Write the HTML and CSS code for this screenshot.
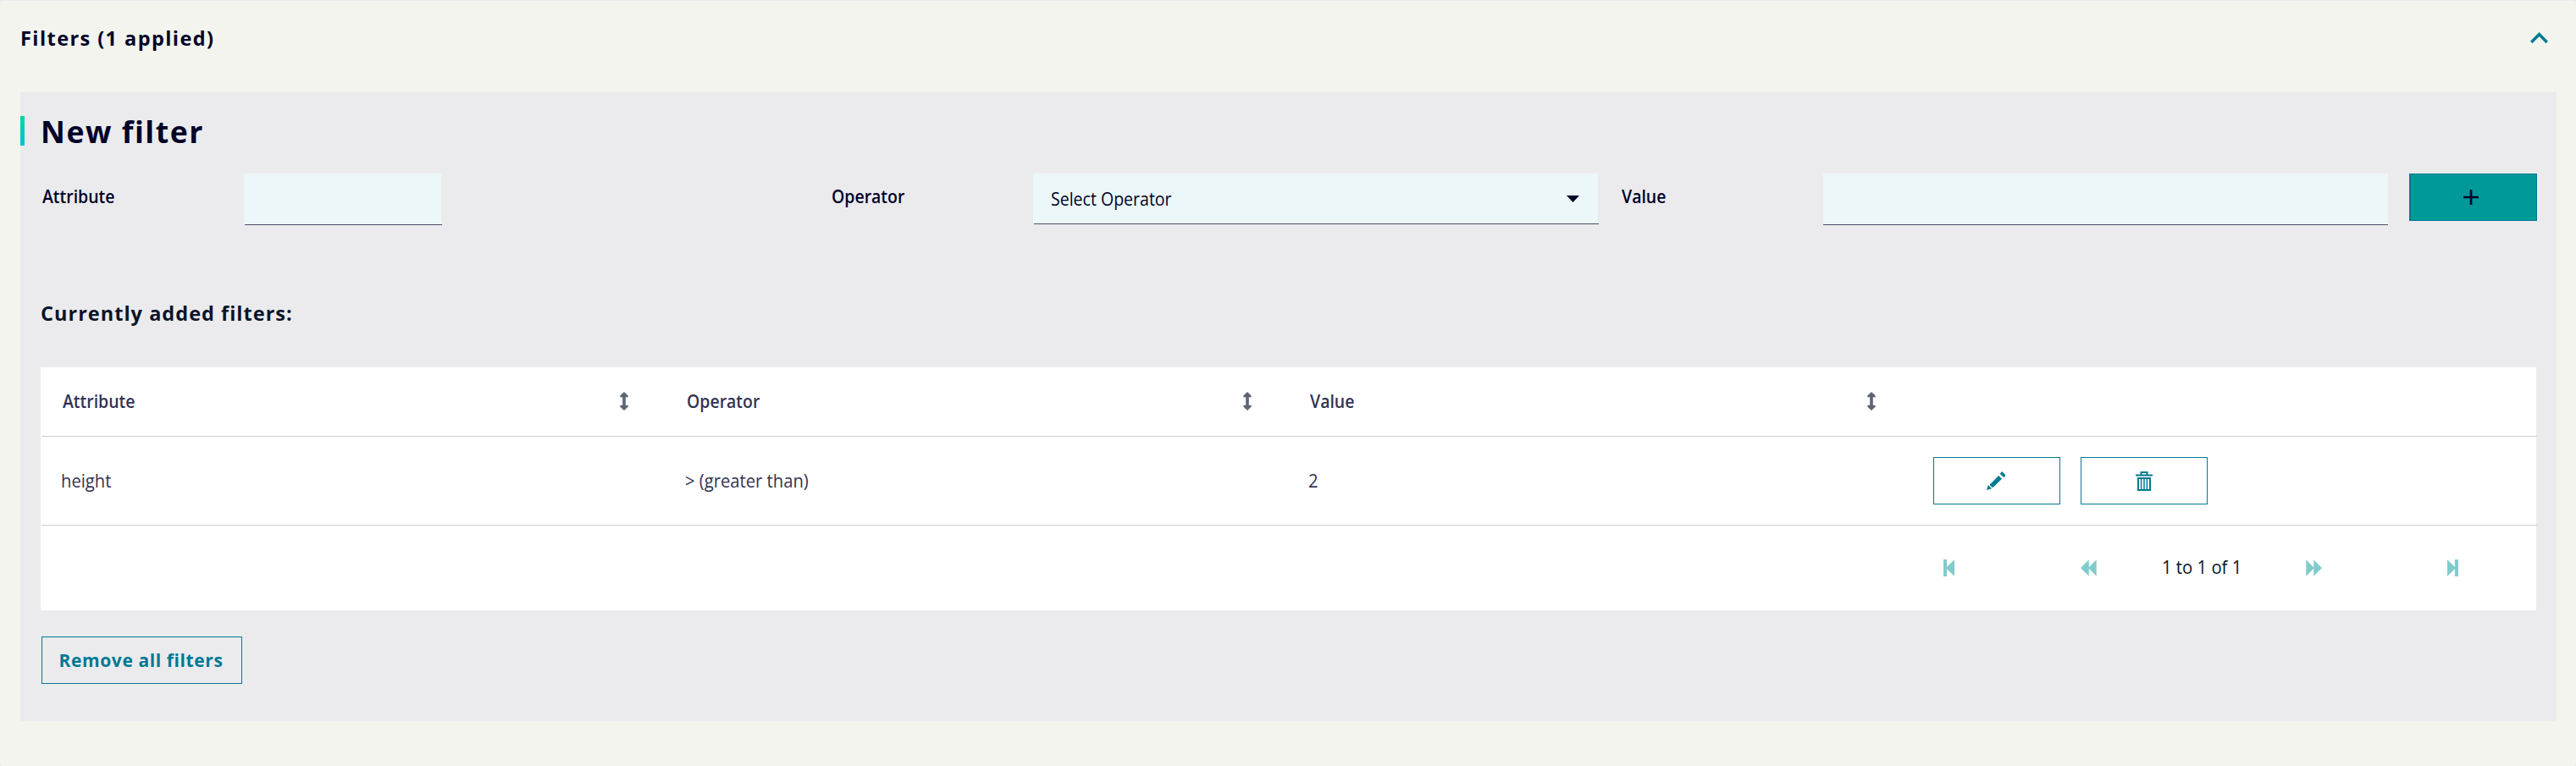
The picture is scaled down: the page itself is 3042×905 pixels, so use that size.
FILE: index.html
```html
<!DOCTYPE html>
<html lang="en">
<head>
<meta charset="utf-8">
<title>Filters</title>
<link rel="stylesheet" href="styles.css">
</head>
<body>
<section class="card">
  <header class="card-header">
    <h1 class="card-title">Filters (1 applied)</h1>
    <svg class="chevron" width="21" height="14" viewBox="0 0 21 14"><path d="M1.3 12L10.5 2.6L19.7 12" fill="none" stroke="#007993" stroke-width="3.5"/></svg>
  </header>
  <div class="panel">
    <h2 class="heading">New filter</h2>
    <form class="form">
      <label class="label">Attribute</label>
      <div class="field field-short"></div>
      <label class="label label-operator">Operator</label>
      <div class="field field-select"><span class="select-text">Select Operator</span>
        <svg class="caret" width="15" height="8" viewBox="0 0 15 8"><path d="M0 0H15L7.5 8Z" fill="#000028"/></svg>
      </div>
      <label class="label">Value</label>
      <div class="field"></div>
      <button class="add" type="button"><svg width="18" height="18" viewBox="0 0 18 18"><path d="M9 0V18M0 9H18" stroke="#000028" stroke-width="2.7"/></svg></button>
    </form>
    <h3 class="subheading">Currently added filters:</h3>
    <div class="table">
      <div class="row row-head">
        <div class="cell"><span class="column-name">Attribute</span><svg class="sort" width="10" height="22" viewBox="0 0 10 22"><path d="M5 0L9.7 4.6V6.3H6.8V15.7H9.7V17.4L5 22L.3 17.4V15.7H3.2V6.3H.3V4.6Z"/></svg></div>
        <div class="cell"><span class="column-name">Operator</span><svg class="sort" width="10" height="22" viewBox="0 0 10 22"><path d="M5 0L9.7 4.6V6.3H6.8V15.7H9.7V17.4L5 22L.3 17.4V15.7H3.2V6.3H.3V4.6Z"/></svg></div>
        <div class="cell"><span class="column-name">Value</span><svg class="sort" width="10" height="22" viewBox="0 0 10 22"><path d="M5 0L9.7 4.6V6.3H6.8V15.7H9.7V17.4L5 22L.3 17.4V15.7H3.2V6.3H.3V4.6Z"/></svg></div>
        <div class="cell"></div>
      </div>
      <div class="line"></div>
      <div class="row row-body">
        <div class="cell"><span class="cell-text">height</span></div>
        <div class="cell"><span class="cell-text">&gt; (greater than)</span></div>
        <div class="cell"><span class="cell-text">2</span></div>
        <div class="actions">
          <button class="outline" type="button"><svg class="pencil" width="22" height="22" viewBox="0 0 22 22"><path d="M0 22L1.8 16L6 20.2ZM4 15.2L14.2 5L18 8.8L7.8 18.8H6.4L4 16.5ZM15.6 2.7L18.3 0L22 4V5.2L20.3 6.9Z" fill="#007993"/></svg></button>
          <button class="outline" type="button"><svg width="20" height="23" viewBox="0 0 20 23"><path d="M6.5 4.5V1H13.5V4.5M0 4.5H20M3 8H17V22H3Z" fill="none" stroke="#007993" stroke-width="2"/><path d="M6.6 8V22M10 8V22M13.4 8V22" fill="none" stroke="#007993" stroke-width="1.5"/></svg></button>
        </div>
      </div>
      <div class="line"></div>
      <div class="pager">
        <svg class="first" width="13" height="20" viewBox="0 0 13 20"><path d="M0 0H4V8.7L13 .3V19.7L4 11.3V20H0Z" fill="#80cccc"/></svg>
        <svg class="prev" width="19" height="20" viewBox="0 0 19 20"><path d="M0 10L9.8 .3V9.2L18.7 .3V19.7L9.8 10.8V19.7Z" fill="#80cccc"/></svg>
        <span class="pager-text">1 to 1 of 1</span>
        <svg class="next" width="19" height="20" viewBox="0 0 19 20"><path d="M19 10L9.2 .3V9.2L.3 .3V19.7L9.2 10.8V19.7Z" fill="#80cccc"/></svg>
        <svg class="last" width="13" height="20" viewBox="0 0 13 20"><path d="M13 0H9V8.7L0 .3V19.7L9 11.3V20H13Z" fill="#80cccc"/></svg>
      </div>
    </div>
    <button class="outline remove" type="button"><span class="remove-text">Remove all filters</span></button>
  </div>
</section>
</body>
</html>
```
FILE: styles.css
```css
* { box-sizing: border-box; }

body {
  margin: 0;
  padding-top: 1px;
  background: #ebebed;
  color: #000028;
  font: 400 21px/28px "Open Sans", "Noto Sans", sans-serif;
}

svg { display: block; flex: none; }

h1, h2, h3 { margin: 0; font-weight: 700; white-space: nowrap; }

.card {
  height: 904px;
  padding: 0 23px 0 24px;
  border-radius: 4px;
  background: #f3f4ee;
}

.card-header {
  display: flex;
  justify-content: space-between;
  height: 108px;
  padding: 28px 10px 0 0;
}

.card-title {
  font-size: 23.5px;
  line-height: 32px;
  letter-spacing: 1.43px;
}

.chevron { margin-top: 9px; }

.panel {
  height: 743px;
  padding-top: 28px;
  background: #ebebed;
}

.heading {
  height: 35px;
  padding-left: 19px;
  border-left: 5px solid;
  border-image: linear-gradient(#00d7a0, #00bedc) 1;
  font-size: 35.5px;
  line-height: 37px;
  letter-spacing: 1.55px;
}

.form {
  display: grid;
  grid-template-columns: 240px 693px 239px 693px 240px 692px 151px;
  height: 61px;
  margin: 33px 0 0 24px;
}

.label {
  justify-self: start;
  margin: 13px 0 0 2px;
  font-weight: 600;
  transform: scaleX(.927);
  transform-origin: left;
}

.label-operator { margin-left: 1px; }

.field {
  position: relative;
  width: 667px;
  height: 60px;
  background: #ebf7f8;
}

.field::after {
  content: "";
  position: absolute;
  top: 100%;
  left: 0;
  width: 100%;
  height: 1px;
  background: #4c4c68;
}

.field-short { width: 233px; }
.field-short::after, .field-select::after { left: 1px; }

.field-select {
  display: flex;
  justify-content: space-between;
  height: 59px;
  padding: 16px 22px 0 21px;
}

.select-text { transform: scaleX(.93); transform-origin: left; }
.caret { margin-top: 10px; }

button {
  display: flex;
  align-items: center;
  justify-content: center;
  width: 150px;
  height: 56px;
  padding: 0;
  border: 1px solid #007993;
  background: none;
  color: #007993;
  font: inherit;
}

.add {
  width: 151px;
  border-left-width: 2px;
  background: #009999;
}

.add svg { margin: 0 7px 0 0; }

.subheading {
  margin: 88px 0 48px 24px;
  font-size: 23.5px;
  line-height: 32px;
  letter-spacing: 1.02px;
  color: #0a1428;
}

.table {
  width: 2947px;
  margin-left: 24px;
  background: #fff;
  color: #333353;
}

.row {
  display: grid;
  grid-template-columns: 736.5px 736.5px 736.5px 1fr;
}

.row-head {
  height: 81px;
  padding-top: 26px;
  font-weight: 600;
}

.row-head .cell {
  display: flex;
  justify-content: space-between;
  padding: 0 43px 0 26px;
}

.column-name { transform: scaleX(.927); transform-origin: left; }

.sort { margin-top: 3px; fill: #5d6472; }

.line {
  height: 1px;
  margin: 0 -1px 0 1px;
  background: #cdcdd0;
}

.row-body { height: 104px; }
.row-body .cell { padding: 38px 0 0 24px; }

.cell-text {
  display: inline-block;
  transform: scaleX(.962);
  transform-origin: left;
}

.actions {
  display: flex;
  gap: 24px;
  padding: 24px 0 0 25.5px;
}

.pencil { margin: 0 2px 0 0; }

.pager {
  display: flex;
  height: 100px;
  padding: 40px 0 0 2247px;
  color: #0a1428;
}

.prev { margin-left: 149px; }

.pager-text {
  width: 92px;
  margin: -5px 0 0 77px;
  white-space: nowrap;
  transform: scaleX(.965);
  transform-origin: left;
}

.next { margin-left: 78px; }
.last { margin-left: 148px; }

.remove {
  width: 237px;
  margin: 31px 0 0 25px;
  font-weight: 700;
}

.remove-text {
  margin-right: 2px;
  letter-spacing: .6px;
  white-space: nowrap;
}
```
